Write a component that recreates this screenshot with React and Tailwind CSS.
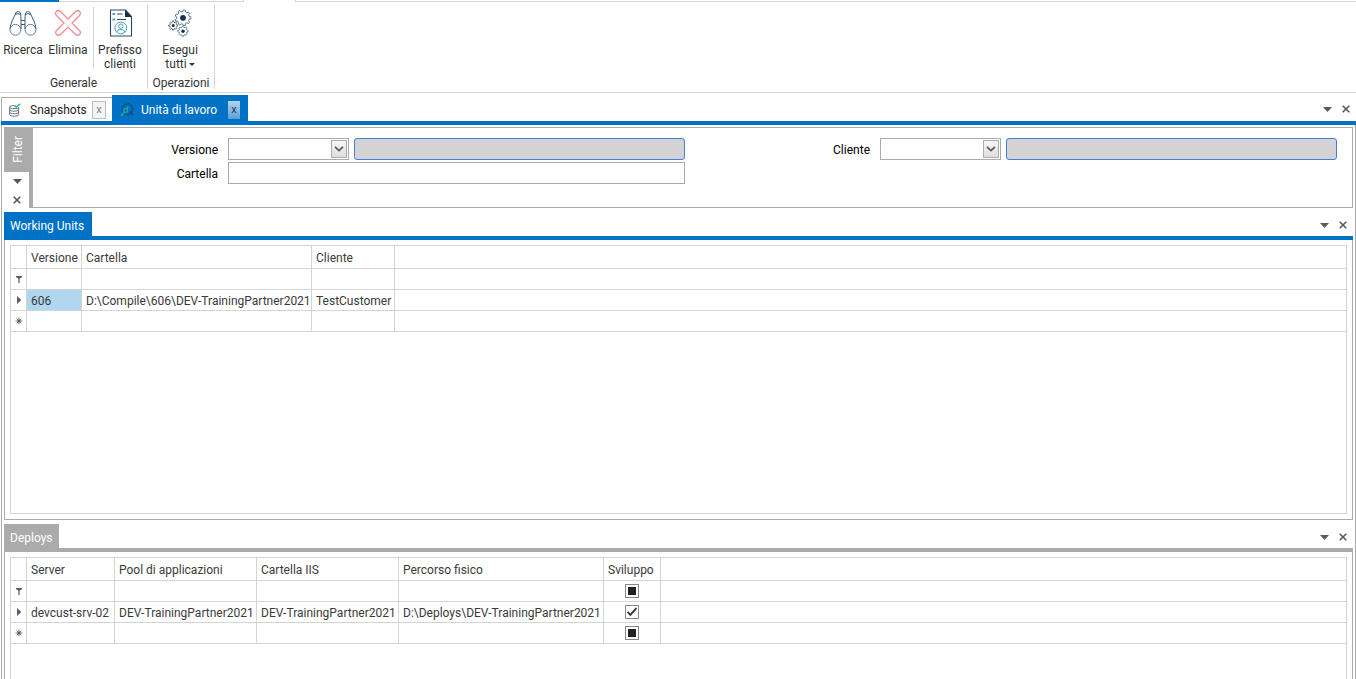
import React from "react";

const Binoculars = () => (
  <svg width="28" height="28" viewBox="0 0 28 28" fill="none" stroke="#3a5773" strokeWidth="1">
    <circle cx="6.4" cy="20.8" r="5.4" stroke="#5f8199" />
    <circle cx="21.5" cy="20.8" r="5.4" stroke="#5f8199" />
    <path d="M1 19.6 C1.6 14 5 8 6.6 4.8 M27 19.6 C26.4 14 23 8 21.4 4.8 M11.6 4.8 C12.2 8 12 14 12 20 M16.4 4.8 C15.8 8 16 14 16 20" />
    <path d="M6.6 5 C6.4 2 11.4 1.6 11.6 5 M21.4 5 C21.6 2 16.6 1.6 16.4 5 M6.4 5.4 Q9 3.9 11.8 5.4 M21.6 5.4 Q19 3.9 16.2 5.4" />
    <path d="M12 11.5 H16 M12 15.5 H16" />
  </svg>
);

const Cross = () => (
  <svg width="28" height="28" viewBox="0 0 28 28" fill="none" stroke="#fa8490" strokeWidth="1.2">
    <path d="M14 10 L21.5 2.5 A2.8 2.8 0 0 1 25.5 6.5 L18 14 L25.5 21.5 A2.8 2.8 0 0 1 21.5 25.5 L14 18 L6.5 25.5 A2.8 2.8 0 0 1 2.5 21.5 L10 14 L2.5 6.5 A2.8 2.8 0 0 1 6.5 2.5 Z" />
  </svg>
);

const ClientSheet = () => (
  <svg width="28" height="28" viewBox="0 0 28 28" fill="none">
    <path d="M4.5 1 H19.5 L25.5 7.5 V27 H4.5 Z" stroke="#2c4a66" strokeWidth="1.1" />
    <path d="M19 .5 L26 8 H19 Z" fill="#12304f" />
    <path d="M11 5 H16.5 M11 10.5 H20" stroke="#2c4a66" strokeWidth="1.2" />
    <path d="M6.5 5 H9 M6.5 10.5 H9" stroke="#4ba3c3" strokeWidth="2" />
    <circle cx="14.8" cy="19" r="5.9" stroke="#4ba3c3" strokeWidth="1" />
    <circle cx="14.8" cy="17.2" r="2.2" stroke="#4ba3c3" strokeWidth="1" />
    <path d="M10.8 23.2 Q11 20.4 14.8 20.4 Q18.6 20.4 18.8 23.2" stroke="#4ba3c3" strokeWidth="1" />
  </svg>
);

const gearPath = (cx, cy, inner, outer, teeth) => {
  const step = (Math.PI * 2) / teeth;
  const at = (r, a) => `${(cx + r * Math.cos(a)).toFixed(2)} ${(cy + r * Math.sin(a)).toFixed(2)}`;
  const points = [];
  for (let i = 0; i < teeth; i++) {
    const a = i * step;
    points.push(at(inner, a - step * 0.3), at(outer, a - step * 0.18), at(outer, a + step * 0.18), at(inner, a + step * 0.3));
  }
  return `M${points.join(" L")} Z`;
};

const Gears = () => (
  <svg width="28" height="28" viewBox="0 0 28 28" fill="none" stroke="#4a657f" strokeWidth=".9" strokeLinejoin="round">
    <path d={gearPath(17, 8.8, 6.3, 7.9, 9)} />
    <circle cx="17" cy="8.8" r="2.9" fill="#12304f" stroke="none" />
    <path d={gearPath(7.2, 16.6, 3.4, 4.5, 8)} />
    <circle cx="7.2" cy="16.6" r="1.5" fill="#12304f" stroke="none" />
    <path d={gearPath(17, 22.2, 4, 5.2, 8)} stroke="#5f8199" />
    <circle cx="17" cy="22.2" r="1.7" fill="#12304f" stroke="none" />
  </svg>
);

const Database = () => (
  <svg width="14" height="14" viewBox="0 0 14 14" fill="none" stroke="#64748b" strokeWidth="1">
    <path d="M7 2.6 C3.5 2.4 1.6 3.1 1.6 4.2 C1.6 6 10.4 6 10.6 4.4 M1.6 4.2 V11.6 C1.8 13.8 10.4 13.8 10.6 11.6 V4.6 M1.6 6.7 C1.8 8.7 10.4 8.7 10.6 6.7 M1.6 9.2 C1.8 11.2 10.4 11.2 10.6 9.2" />
    <path d="M6.2 2.2 L8.2 4.2 L12.2 .8" stroke="#2fc877" strokeWidth="1.6" />
  </svg>
);

const UnitIcon = () => (
  <svg width="14" height="14" viewBox="0 0 14 14" fill="none">
    <path d={gearPath(7.4, 6.2, 4.8, 5.8, 9)} stroke="#1b4468" strokeWidth=".9" />
    <circle cx="5.6" cy="7.6" r="2" stroke="#27bd82" strokeWidth="1" />
    <path d="M4.3 9.3 L1.2 12.8 M6.6 5.8 L8.2 4" stroke="#27bd82" strokeWidth="1.2" />
    <path d="M8.5 8.5 L12.8 12.8 M9.8 7.8 L13.4 11.4" stroke="#1b4468" strokeWidth=".9" />
  </svg>
);

const Caret = () => (
  <svg width="9" height="5" viewBox="0 0 9 5" fill="#5a5a5a">
    <path d="M0 0 H9 L4.5 5 Z" />
  </svg>
);

const Close = () => (
  <svg width="8" height="8" viewBox="0 0 8 8" fill="none" stroke="#5a5a5a" strokeWidth="1.6">
    <path d="M.7 .7 L7.3 7.3 M7.3 .7 L.7 7.3" />
  </svg>
);

const Marker = ({ kind }) => (
  <svg className="mx-auto block" width="8" height="8" viewBox="0 0 8 8" fill="#5a5a5a">
    {kind === "filter" && <path d="M1 1 H7 V2 L4.6 3.8 V8 H3.4 V3.8 L1 2 Z" />}
    {kind === "current" && <path d="M2 0 L6.2 4 L2 8 Z" />}
    {kind === "new" && (
      <g stroke="#5a5a5a" strokeWidth=".7">
        <circle cx="4" cy="4" r="1.2" />
        <path d="M4 .5 V7.5 M.5 4 H7.5 M1.7 1.7 L6.3 6.3 M6.3 1.7 L1.7 6.3" />
      </g>
    )}
  </svg>
);

const PanelButtons = ({ className }) => (
  <div className={`ml-auto flex items-center gap-2.5 ${className}`}>
    <button type="button" aria-label="Menu"><Caret /></button>
    <button type="button" aria-label="Chiudi"><Close /></button>
  </div>
);

const RibbonButton = ({ icon, className, children }) => (
  <button type="button" className={`flex flex-col items-center pt-1 leading-[14px] whitespace-nowrap ${className}`}>
    <span className="mb-1.5">{icon}</span>
    {children}
  </button>
);

const Lookup = ({ id, label }) => (
  <div className="flex items-center">
    <label htmlFor={id} className="w-[185px] shrink-0 pt-0.5 text-right">{label}</label>
    <div className="relative ml-2.5 h-[22px] w-[121px] shrink-0">
      <select id={id} className="h-full w-full appearance-none border border-[#ababab] bg-white px-1">
        <option></option>
      </select>
      <span className="pointer-events-none absolute top-0.5 right-0.5 flex h-[18px] w-4 items-center justify-center border border-[#ababab] bg-gradient-to-b from-[#f6f6f6] to-[#dedede]">
        <svg width="10" height="6" viewBox="0 0 10 6" fill="none" stroke="#5a5a5a" strokeWidth="1.7">
          <path d="M1 .8 L5 4.6 L9 .8" />
        </svg>
      </span>
    </div>
    <input
      type="text"
      readOnly
      aria-label={`Descrizione ${label}`}
      className="ml-[5px] h-[22px] min-w-0 flex-1 rounded-[3px] border border-[#3f7fe0] bg-[#d3d3d3] px-1"
    />
  </div>
);

const Check = ({ state, label }) => (
  <span className="relative mx-auto block size-3.5">
    <input
      type="checkbox"
      aria-label={label}
      defaultChecked={state === "on"}
      ref={(el) => { if (el) el.indeterminate = state === "mixed"; }}
      className="block size-3.5 appearance-none border border-[#8a8a8a] bg-white"
    />
    <svg className="pointer-events-none absolute inset-0" width="14" height="14" viewBox="0 0 14 14">
      {state === "mixed" ? (
        <path d="M3 3 H11 V11 H3 Z" fill="#222" />
      ) : (
        <path d="M2.6 6.8 L5.4 9.8 L11.4 3.2" fill="none" stroke="#333" strokeWidth="1.9" />
      )}
    </svg>
  </span>
);

const line = "border-r border-b border-[#d4d4d4] font-normal";

const Grid = ({ columns, rows }) => (
  <table className="w-full table-fixed border-separate border-spacing-0 text-left whitespace-nowrap text-[#3a3a3a]">
    <colgroup>
      <col className="w-4" />
      {columns.map((c) => <col key={c.name} className={c.width} />)}
      <col />
    </colgroup>
    <thead>
      <tr className="h-[23px]">
        <th className={line}></th>
        {columns.map((c) => <th key={c.name} className={`${line} pt-0.5 pl-1`}>{c.name}</th>)}
        <th className="border-b border-[#d4d4d4]"></th>
      </tr>
    </thead>
    <tbody>
      {rows.map((r) => (
        <tr key={r.kind} className="h-[21px]">
          <td className={`${line} p-0`}><Marker kind={r.kind} /></td>
          {r.cells.map((cell, i) => (
            <td key={i} className={`${line} ${typeof cell === "string" ? "pt-0.5 pl-1" : ""} ${r.selected === i ? "bg-[#b1d6f0]" : ""}`}>{cell}</td>
          ))}
          <td className="border-b border-[#d4d4d4]"></td>
        </tr>
      ))}
    </tbody>
  </table>
);

const unitColumns = [
  { name: "Versione", width: "w-[55px]" },
  { name: "Cartella", width: "w-[230px]" },
  { name: "Cliente", width: "w-[83px]" },
];
const unitRows = [
  { kind: "filter", cells: ["", "", ""] },
  { kind: "current", selected: 0, cells: ["606", "D:\\Compile\\606\\DEV-TrainingPartner2021", "TestCustomer"] },
  { kind: "new", cells: ["", "", ""] },
];

const deployColumns = [
  { name: "Server", width: "w-[88px]" },
  { name: "Pool di applicazioni", width: "w-[142px]" },
  { name: "Cartella IIS", width: "w-[142px]" },
  { name: "Percorso fisico", width: "w-[205px]" },
  { name: "Sviluppo", width: "w-[57px]" },
];
const deployRows = [
  { kind: "filter", cells: ["", "", "", "", <Check state="mixed" label="Filtro sviluppo" />] },
  {
    kind: "current",
    cells: [
      "devcust-srv-02",
      "DEV-TrainingPartner2021",
      "DEV-TrainingPartner2021",
      "D:\\Deploys\\DEV-TrainingPartner2021",
      <Check state="on" label="Sviluppo devcust-srv-02" />,
    ],
  },
  { kind: "new", cells: ["", "", "", "", <Check state="mixed" label="Nuovo sviluppo" />] },
];

export default function App() {
  return (
    <div className="flex h-screen flex-col overflow-hidden bg-white font-['Roboto','Noto_Sans',sans-serif] text-[12px] leading-4 text-[#1e1e1e]">
      <div className="flex h-0.5 shrink-0">
        <div className="w-[59px] border-t-2 border-[#0072c6]"></div>
        <div className="w-[185px] border-r border-b border-[#d4d4d4]"></div>
        <div className="w-[51px]"></div>
        <div className="flex-1 border-b border-l border-[#d4d4d4]"></div>
      </div>

      <header className="flex h-[91px] shrink-0 border-b border-[#d4d4d4] pt-[3px] text-[#333]">
        <section className="flex h-[84px] flex-col border-r border-[#d4d4d4]">
          <div className="flex h-[66px]">
            <RibbonButton icon={<Binoculars />} className="w-[46px]">Ricerca</RibbonButton>
            <RibbonButton icon={<Cross />} className="w-11">Elimina</RibbonButton>
            <div className="my-0.5 ml-[3px] border-l border-[#d4d4d4]"></div>
            <RibbonButton icon={<ClientSheet />} className="mr-px w-[52px]">
              <span>Prefisso</span>
              <span>clienti</span>
            </RibbonButton>
          </div>
          <h2 className="pt-1 text-center">Generale</h2>
        </section>
        <section className="flex h-[84px] w-[67px] flex-col border-r border-[#d4d4d4]">
          <div className="flex h-[66px] justify-center pr-0.5">
            <RibbonButton icon={<Gears />} className="w-[60px]">
              <span>Esegui</span>
              <span className="flex items-center gap-0.5">
                tutti
                <svg width="6" height="3" viewBox="0 0 6 3" fill="#333"><path d="M0 0 H6 L3 3 Z" /></svg>
              </span>
            </RibbonButton>
          </div>
          <h2 className="pt-1 text-center">Operazioni</h2>
        </section>
      </header>

      <nav className="ml-px flex shrink-0 items-end border-b-4 border-[#0072c6] pt-0.5">
        <div className="flex h-6 w-[111px] items-center border-t border-l border-[#ababab] pl-1.5">
          <Database />
          <a href="#snapshots" className="ml-2">Snapshots</a>
          <button type="button" aria-label="Chiudi Snapshots" className="mr-1.5 ml-auto h-[18px] w-3.5 border border-[#c0c0c0] bg-[#f4f4f4] text-[11px] leading-4 text-[#6f86a0]">x</button>
        </div>
        <div className="flex h-[26px] w-[136px] items-center bg-[#0072c6] pt-1 pl-2 text-white">
          <UnitIcon />
          <a href="#unita" className="ml-[7px]">Unità di lavoro</a>
          <button type="button" aria-label="Chiudi Unità di lavoro" className="mr-2 ml-auto h-[18px] w-3 bg-gradient-to-b from-[#b4d4ec] to-[#5c9fd3] text-[11px] leading-4 text-[#123a66]">x</button>
        </div>
        <PanelButtons className="self-center pt-0.5 pr-1.5" />
      </nav>

      <main className="ml-px flex min-h-0 flex-1 flex-col border-x border-[#ababab] px-0.5 pt-0.5">
        <section className="flex h-[81px] shrink-0">
          <div className="flex w-[25px] shrink-0 flex-col items-center">
            <h2 className="flex h-[45px] w-full items-center justify-center bg-[#ababab] pl-0.5 text-white">
              <span className="rotate-180 [writing-mode:vertical-rl]">Filter</span>
            </h2>
            <button type="button" aria-label="Menu filtro" className="mt-[7px] pl-px"><Caret /></button>
            <button type="button" aria-label="Chiudi filtro" className="mt-3 pl-px"><Close /></button>
          </div>
          <form className="grid flex-1 grid-cols-2 content-start gap-y-0.5 border border-l-4 border-[#ababab] pt-2.5 pr-[15px] text-black">
            <Lookup id="versione" label="Versione" />
            <Lookup id="cliente" label="Cliente" />
            <div className="flex items-center">
              <label htmlFor="cartella" className="w-[185px] shrink-0 pt-0.5 text-right">Cartella</label>
              <input id="cartella" type="text" className="ml-2.5 h-[22px] min-w-0 flex-1 border border-[#ababab] bg-white px-1" />
            </div>
          </form>
        </section>

        <section className="mt-1 flex h-[308px] shrink-0 flex-col">
          <div className="flex h-7 shrink-0 border-b-4 border-[#0072c6]">
            <h2 className="flex w-[88px] items-center bg-[#0072c6] pt-1 pl-1.5 whitespace-nowrap text-white">Working Units</h2>
            <PanelButtons className="pt-0.5 pr-1.5" />
          </div>
          <div className="flex-1 border border-t-0 border-[#ababab] p-[5px]">
            <div className="h-full border border-[#d4d4d4]">
              <Grid columns={unitColumns} rows={unitRows} />
            </div>
          </div>
        </section>

        <section className="mt-1 flex min-h-0 flex-1 flex-col">
          <div className="flex h-7 shrink-0 border-b-4 border-[#ababab]">
            <h2 className="flex w-[55px] items-center bg-[#ababab] pt-1 pl-1.5 text-white">Deploys</h2>
            <PanelButtons className="pt-0.5 pr-1.5" />
          </div>
          <div className="flex-1 border-x border-[#ababab] px-[5px] pt-[5px]">
            <div className="h-full border border-b-0 border-[#d4d4d4]">
              <Grid columns={deployColumns} rows={deployRows} />
            </div>
          </div>
        </section>
      </main>
    </div>
  );
}
